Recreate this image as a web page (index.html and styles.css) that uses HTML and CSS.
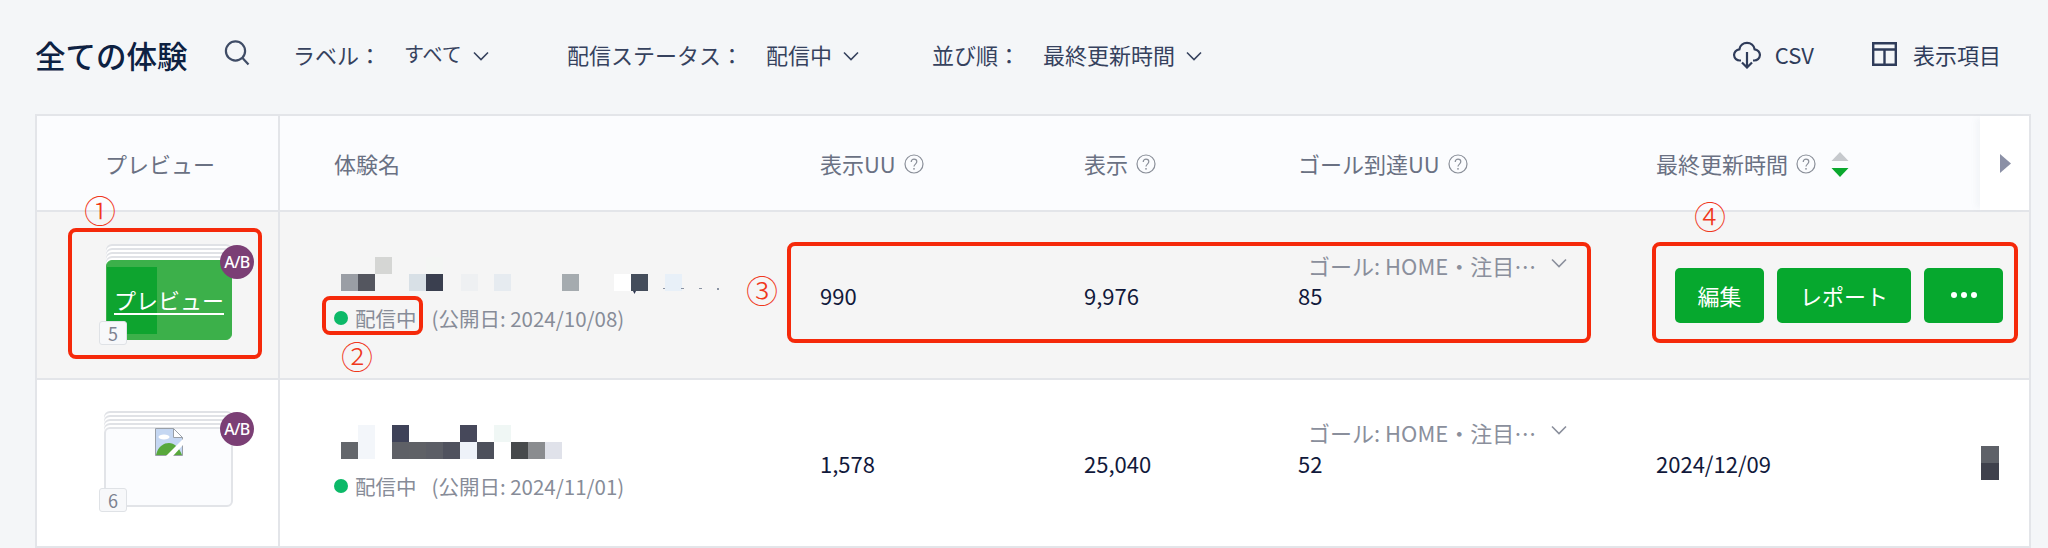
FILE: index.html
```html
<!DOCTYPE html>
<html lang="ja">
<head>
<meta charset="utf-8">
<title>全ての体験</title>
<link rel="stylesheet" href="styles.css">
</head>
<body>
<svg class="defs" width="0" height="0" aria-hidden="true">
  <symbol id="help" viewBox="0 0 20 20"><circle cx="10" cy="10" r="9" fill="none" stroke="currentColor" stroke-width="1.2"/><path d="M7.200 8C7.200 6.200 8.500 5.200 10 5.200s2.800 1 2.800 2.600c0 2.200-2.800 2.400-2.800 4.800" fill="none" stroke="currentColor" stroke-width="1.2"/><circle cx="10" cy="14.800" r=".9" fill="currentColor"/></symbol>
  <symbol id="chev" viewBox="0 0 16 10"><path d="M1 1.500l7 7 7-7" fill="none" stroke="currentColor" stroke-width="1.600"/></symbol>
</svg>
<header class="toolbar">
  <h1 class="title">全ての体験</h1>
  <svg class="ic-search" viewBox="0 0 26 26"><circle cx="11.500" cy="11" r="9.600" fill="none" stroke="currentColor" stroke-width="2.200"/><path d="M18.500 18l6 6.500" fill="none" stroke="currentColor" stroke-width="2.200"/></svg>
  <div class="filter f-label"><span>ラベル：</span><span class="fval">すべて</span><svg class="chev"><use href="#chev"/></svg></div>
  <div class="filter f-status"><span>配信ステータス：</span><span class="fval">配信中</span><svg class="chev"><use href="#chev"/></svg></div>
  <div class="filter f-sort"><span>並び順：</span><span class="fval">最終更新時間</span><svg class="chev"><use href="#chev"/></svg></div>
  <div class="tool tool-csv">
    <svg class="ic-cloud" viewBox="0 0 28 29"><path d="M8 20.500H7a5.600 5.600 0 0 1-.6-11.200A7.700 7.700 0 0 1 21.600 9.300 5.600 5.600 0 0 1 21 20.500h-1" fill="none" stroke="currentColor" stroke-width="2.200"/><path d="M14 12v15M9 22.500l5 5 5-5" fill="none" stroke="currentColor" stroke-width="2.200"/></svg>
    <span>CSV</span>
  </div>
  <div class="tool tool-cols">
    <svg class="ic-cols" viewBox="0 0 25 24"><path d="M1.200 1.200h22.600v21.600H1.200zM1.200 7.500h22.600M12.500 7.500v15.300" fill="none" stroke="currentColor" stroke-width="2.400"/></svg>
    <span>表示項目</span>
  </div>
</header>

<main class="table">
  <div class="row head">
    <div class="cell c-thumb c-thumb-head">プレビュー</div>
    <div class="cell c-name">体験名</div>
    <div class="cell">表示UU<svg class="help"><use href="#help"/></svg></div>
    <div class="cell">表示<svg class="help"><use href="#help"/></svg></div>
    <div class="cell">ゴール到達UU<svg class="help"><use href="#help"/></svg></div>
    <div class="cell">最終更新時間<svg class="help"><use href="#help"/></svg>
      <svg class="sort" viewBox="0 0 18 25"><path d="M9 0l8.500 9H.5z" fill="#c6c9cd"/><path d="M.5 16h17L9 25z" fill="#0aa82e"/></svg>
    </div>
    <div class="cell c-more"><svg class="ic-next" viewBox="0 0 11 19"><path d="M0 0l11 9.500L0 19z" fill="#8b90a6"/></svg></div>
  </div>

  <div class="row hover">
    <div class="cell c-thumb c-top">
      <div class="thumb">
        <div class="card green"><span class="side"></span><a class="plink">プレビュー</a></div>
        <span class="ab">A/B</span><span class="count">5</span>
      </div>
    </div>
    <div class="cell c-name c-stack">
      <svg class="mosaic" width="400" height="34" viewBox="0 0 400 34">
        <rect x="34" y="0" width="17" height="17" fill="#d5d6d4"/>
        <rect x="85" y="0" width="17" height="17" fill="#f4f6f4"/>
        <rect x="0" y="17" width="17" height="17" fill="#9a9ea5"/><rect x="17" y="17" width="17" height="17" fill="#54565f"/>
        <rect x="68" y="17" width="17" height="17" fill="#d8e0e6"/><rect x="85" y="17" width="17" height="17" fill="#3a3f4f"/>
        <rect x="120" y="17" width="17" height="17" fill="#eef0f2"/><rect x="153" y="17" width="17" height="17" fill="#e6ebf0"/>
        <rect x="221" y="17" width="17" height="17" fill="#a5abaf"/><rect x="273" y="17" width="17" height="17" fill="#ffffff"/>
        <rect x="290" y="17" width="17" height="17" fill="#444d5b"/><rect x="324" y="17" width="17" height="17" fill="#e8f0f8"/>
        <path d="M292 34l3 0-1.500 3z" fill="#2d3550"/>
        <path d="M322 31h2v1h-2zM340 31h3v1h-3zM358 31h3v1h-3zM376 31h2v2h-2z" fill="#8a93a3"/>
      </svg>
      <div class="status"><i class="dot"></i><span>配信中</span><span class="pub">(公開日: 2024/10/08)</span></div>
    </div>
    <div class="cell num">990</div>
    <div class="cell num">9,976</div>
    <div class="cell c-goal">
      <div class="goal"><span>ゴール: HOME・注目…</span><svg class="chev goal-chev"><use href="#chev"/></svg></div>
      <div class="num">85</div>
    </div>
    <div class="cell c-actions">
      <button class="btn b-edit">編集</button>
      <button class="btn b-report">レポート</button>
      <button class="btn b-more"><i></i><i></i><i></i></button>
    </div>
  </div>

  <div class="row">
    <div class="cell c-thumb c-top">
      <div class="thumb thumb-empty">
        <div class="card">
          <svg class="broken" viewBox="0 0 28 28"><path d="M.5.500h18l9 9v18H.5z" fill="#c5d7f2" stroke="#9aa0a8"/><path d="M18.500.500v9h9z" fill="#fff" stroke="#9aa0a8"/><ellipse cx="9" cy="9" rx="5.500" ry="2.600" fill="#fff"/><path d="M1 27c2-9 8-12 13-12s10 4 13 12z" fill="#58a83c"/><path d="M11 28L28 11v6L18 28z" fill="#fff"/></svg>
        </div>
        <span class="ab">A/B</span><span class="count">6</span>
      </div>
    </div>
    <div class="cell c-name c-stack">
      <svg class="mosaic" width="400" height="34" viewBox="0 0 400 34">
        <rect x="17" y="0" width="17" height="17" fill="#f3f6fa"/><rect x="51" y="0" width="17" height="17" fill="#3e4258"/>
        <rect x="119" y="0" width="17" height="17" fill="#46485a"/><rect x="153" y="0" width="17" height="17" fill="#f0f7f5"/>
        <rect x="0" y="17" width="17" height="17" fill="#63666b"/><rect x="17" y="17" width="17" height="17" fill="#f3f6fa"/>
        <rect x="51" y="17" width="17" height="17" fill="#5e6066"/><rect x="68" y="17" width="17" height="17" fill="#5f6166"/>
        <rect x="85" y="17" width="17" height="17" fill="#5c5e66"/><rect x="102" y="17" width="17" height="17" fill="#50525e"/>
        <rect x="119" y="17" width="17" height="17" fill="#eef2f9"/><rect x="136" y="17" width="17" height="17" fill="#4d505b"/>
        <rect x="170" y="17" width="17" height="17" fill="#474a4c"/><rect x="187" y="17" width="17" height="17" fill="#8a8c8f"/>
        <rect x="204" y="17" width="17" height="17" fill="#e0e2ea"/>
      </svg>
      <div class="status"><i class="dot"></i><span>配信中</span><span class="pub">(公開日: 2024/11/01)</span></div>
    </div>
    <div class="cell num">1,578</div>
    <div class="cell num">25,040</div>
    <div class="cell c-goal c-goal2">
      <div class="goal"><span>ゴール: HOME・注目…</span><svg class="chev goal-chev"><use href="#chev"/></svg></div>
      <div class="num">52</div>
    </div>
    <div class="cell num">2024/12/09</div>
    <div class="cell c-more c-more-left"><svg class="mini" viewBox="0 0 18 34"><rect width="18" height="17" fill="#5e6168"/><rect y="17" width="18" height="17" fill="#3f414c"/></svg></div>
  </div>
</main>

<div class="mark m1"></div>
<div class="mark m2"></div>
<div class="mark m3"></div>
<div class="mark m4"></div>
<span class="no n1">①</span>
<span class="no n2">②</span>
<span class="no n3">③</span>
<span class="no n4">④</span>
</body>
</html>
```
FILE: styles.css
```css
* { box-sizing: border-box; }
html, body { margin: 0; height: 548px; overflow: hidden; }
body {
  position: relative;
  background: #f4f6f8;
  font-family: "Noto Sans CJK JP", "Noto Sans", sans-serif;
  color: #0f1d3f;
}
.defs { position: absolute; }

/* toolbar */
.toolbar {
  display: flex;
  align-items: center;
  height: 114px;
  padding: 0 47px 6px 35px;
  color: #36425e;
}
.title { margin: 1px 0 0; width: 189px; font-size: 30.500px; font-weight: 500; color: #0d2142; line-height: 40px; }
.ic-search { width: 26px; height: 26px; margin-top: -2px; color: #3f4c66; }
.filter { display: flex; align-items: center; font-size: 22px; line-height: 30px; }
.f-label { margin-left: 43px; width: 274px; }
.f-status { width: 365px; }
.f-sort { width: 334px; }
.fval { margin-left: 22px; }
.f-label span:first-child { width: 89px; }
.f-status span:first-child { width: 177px; }
.f-sort span:first-child { width: 89px; }
.f-label .fval { font-size: 20px; }
.chev { width: 16px; height: 10px; margin-left: 11px; margin-top: 3px; }
.tool { display: flex; align-items: center; font-size: 22px; line-height: 30px; color: #2f3c5a; }
.tool-csv { margin-left: auto; }
.ic-cloud { width: 28px; height: 29px; margin-right: 14px; }
.ic-cols { width: 25px; height: 24px; margin-right: 16px; }
.tool-cols { margin-left: 58px; }

/* table */
.table {
  margin: 0 17px 0 35px;
  border-top: 2px solid #e3e5e9;
  border-left: 2px solid #e3e5e9;
  border-right: 2px solid #e3e5e9;
  background: #fff;
}
.row {
  display: grid;
  grid-template-columns: 243px 540px 264px 214px 358px 324px 49px;
  height: 168px;
  border-bottom: 2px solid #e3e5e9;
}
.head { height: 96px; background: #fbfcfe; color: #6a7183; font-size: 22px; line-height: 30px; }
.hover { background: #f5f5f5; }
.cell { display: flex; align-items: center; min-width: 0; }
.c-thumb { padding-left: 67px; border-right: 2px solid #e3e5e9; }
.c-thumb-head { padding-left: 68px; }
.c-top { align-items: flex-start; }
.c-name { padding-left: 54px; }
.c-stack { flex-direction: column; align-items: flex-start; justify-content: center; }
.num { font-size: 22px; line-height: 34px; color: #11193b; }
.help { width: 20px; height: 20px; margin-left: 8px; margin-top: 2px; color: #8a8f99; }
.sort { width: 18px; height: 25px; margin-left: 15px; margin-top: 3px; }
.c-more { justify-content: center; }
.head .c-more { background: #fff; box-shadow: -6px 0 6px -2px rgba(120, 130, 150, .06); }
.c-more-left { justify-content: flex-start; }
.ic-next { width: 11px; height: 19px; margin-left: 1px; }
.mini { width: 18px; height: 34px; margin-left: 1px; }

/* thumbnails */
.thumb { position: relative; width: 129px; height: 96px; margin: 32px 0 0 0; }
.card {
  position: absolute;
  left: 2px; right: 1px; top: 16px; bottom: 0;
  border-radius: 6px;
  background: #fbfcfe;
  border: 1px solid #e2e4e8;
  box-shadow: 0 -2px 0 #fff, 0 -4px 0 #e0e2e6, 0 -6px 0 #fff, 0 -8px 0 #e0e2e6, 0 -10px 0 #fff, 0 -12px 0 #e0e2e6, 0 -14px 0 #fff, 0 -16px 0 #e0e2e6;
}
.green { background: #3cb04a; border-color: #3cb04a; display: flex; align-items: center; justify-content: center; }
.side { position: absolute; left: 0; top: 6px; width: 50px; height: 67px; background: #0ea42f; }
.plink {
  position: relative;
  font-size: 22px; line-height: 30px; color: #fff;
  text-decoration: underline; text-underline-offset: 4px;
  margin-top: -2px;
}
.ab {
  position: absolute; right: -21px; top: 1px;
  width: 34px; height: 34px; border-radius: 50%;
  background: #7b3f75; color: #fff;
  font: 500 16px/34px "Noto Sans", sans-serif; text-align: center; letter-spacing: -.5px;
}
.count {
  position: absolute; left: -5px; bottom: -5px;
  width: 28px; height: 24px;
  border: 1px solid #dfe2e6; border-radius: 3px;
  background: #f7f8fa; color: #7d8391;
  font-size: 18px; line-height: 22px; text-align: center;
}
.thumb-empty { height: 99px; margin-top: 28px; }
.thumb-empty .card { top: 19px; left: 0; right: 0; display: flex; justify-content: center; border-width: 2px; }
.thumb-empty .ab { top: 4px; }
.broken { width: 28px; height: 28px; margin-top: -1px; }

/* name cell */
.mosaic { display: block; margin-left: 7px; overflow: visible; }
.status { display: flex; align-items: center; margin-top: 12px; font-size: 20.500px; line-height: 30px; color: #878c98; }
.dot { width: 14px; height: 14px; border-radius: 50%; background: #0cb968; margin-right: 7px; }
.pub { margin-left: 15px; }

/* goal */
.c-goal { flex-direction: column; align-items: flex-start; padding-top: 38px; }
.c-goal .num { margin-top: -2px; }
.c-goal2 { padding-top: 37px; }
.c-goal2 .num { margin-top: -1px; }
.goal { display: flex; align-items: center; font-size: 22px; line-height: 30px; color: #8a8f9c; margin-left: 10px; }
.goal-chev { margin-left: 15px; margin-top: -4px; }

/* actions */
.c-actions { grid-column: span 2; padding-left: 19px; gap: 13px; }
.btn {
  display: flex; align-items: center; justify-content: center; gap: 4px;
  height: 55px; border: 0; border-radius: 5px;
  background: #06a82e; color: #fff;
  font: 400 22px/30px "Noto Sans CJK JP", sans-serif;
}
.b-edit { width: 89px; }
.b-report { width: 134px; }
.b-more { width: 79px; }
.b-more i { width: 6px; height: 6px; border-radius: 50%; background: #fff; }

/* red review annotations */
.mark { position: absolute; border: 4px solid #f5290a; border-radius: 8px; }
.m1 { left: 68px; top: 228px; width: 194px; height: 131px; }
.m2 { left: 322px; top: 296px; width: 101px; height: 39px; }
.m3 { left: 787px; top: 242px; width: 804px; height: 101px; }
.m4 { left: 1652px; top: 242px; width: 366px; height: 101px; }
.no { position: absolute; width: 40px; text-align: center; font-size: 32px; font-weight: 300; line-height: 40px; color: #f0381c; }
.n1 { left: 80px; top: 189px; }
.n2 { left: 337px; top: 335px; }
.n3 { left: 742px; top: 269px; }
.n4 { left: 1690px; top: 195px; }
```
